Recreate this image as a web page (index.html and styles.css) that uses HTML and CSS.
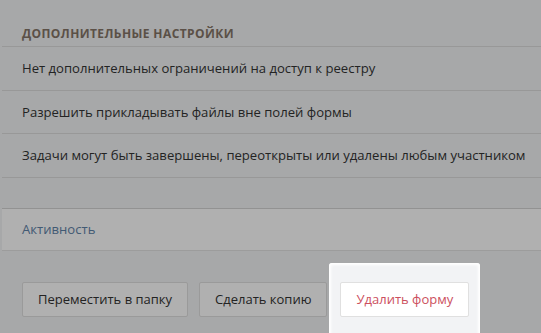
FILE: index.html
```html
<!DOCTYPE html>
<html lang="ru">
<head>
<meta charset="utf-8">
<link rel="stylesheet" href="styles.css">
</head>
<body>
<div class="panel">
  <div class="section-title">Дополнительные настройки</div>
  <div class="row">Нет дополнительных ограничений на доступ к реестру</div>
  <div class="row">Разрешить прикладывать файлы вне полей формы</div>
  <div class="row">Задачи могут быть завершены, переоткрыты или удалены любым участником</div>
  <div class="spacer"></div>
  <div class="activity">Активность</div>
  <div class="actions">
    <button class="btn">Переместить в папку</button>
    <button class="btn">Сделать копию</button>
    <button class="btn btn-danger">Удалить форму</button>
  </div>
</div>
<div class="spotlight"></div>
</body>
</html>
```
FILE: styles.css
```css
html, body {
  margin: 0;
  padding: 0;
  background: #f2f3f5;
  overflow: hidden;
  height: 100%;
}
body {
  font-family: "Open Sans", "Noto Sans", sans-serif;
  color: #333;
  font-size: 13.1px;
}
.panel {
  margin-left: 2px;
}
.section-title {
  height: 47px;
  box-sizing: border-box;
  padding: 25px 20px 0;
  font-size: 12px;
  font-weight: 700;
  text-transform: uppercase;
  letter-spacing: 0.4px;
  color: #847567;
  border-bottom: 1px solid #dcdcdc;
}
.row {
  height: 42.5px;
  display: flex;
  align-items: center;
  padding: 0 20px;
  white-space: nowrap;
  border-bottom: 1px solid #dcdcdc;
}
.spacer {
  height: 30px;
}
.activity {
  height: 41px;
  display: flex;
  align-items: center;
  padding: 0 20px;
  background: #fff;
  border-top: 1px solid #d4d4d4;
  border-bottom: 1px solid #e2e2e2;
  color: #5f83a8;
}
.actions {
  display: flex;
  gap: 11px;
  padding: 31px 20px 0;
}
.btn {
  height: 35px;
  padding: 0 15px;
  border: 1px solid #e0e0e0;
  border-radius: 2px;
  background: #fff;
  font-family: inherit;
  font-size: 13px;
  color: #333;
}
.btn-danger {
  margin-left: 2px;
  color: #cc4f5e;
}
.spotlight {
  position: absolute;
  left: 329px;
  top: 263px;
  width: 151px;
  height: 90px;
  border-radius: 3px;
  box-shadow: 0 0 0 9999px rgba(0, 0, 0, 0.31), inset 0 0 3px 2px #fff;
  pointer-events: none;
}
```
